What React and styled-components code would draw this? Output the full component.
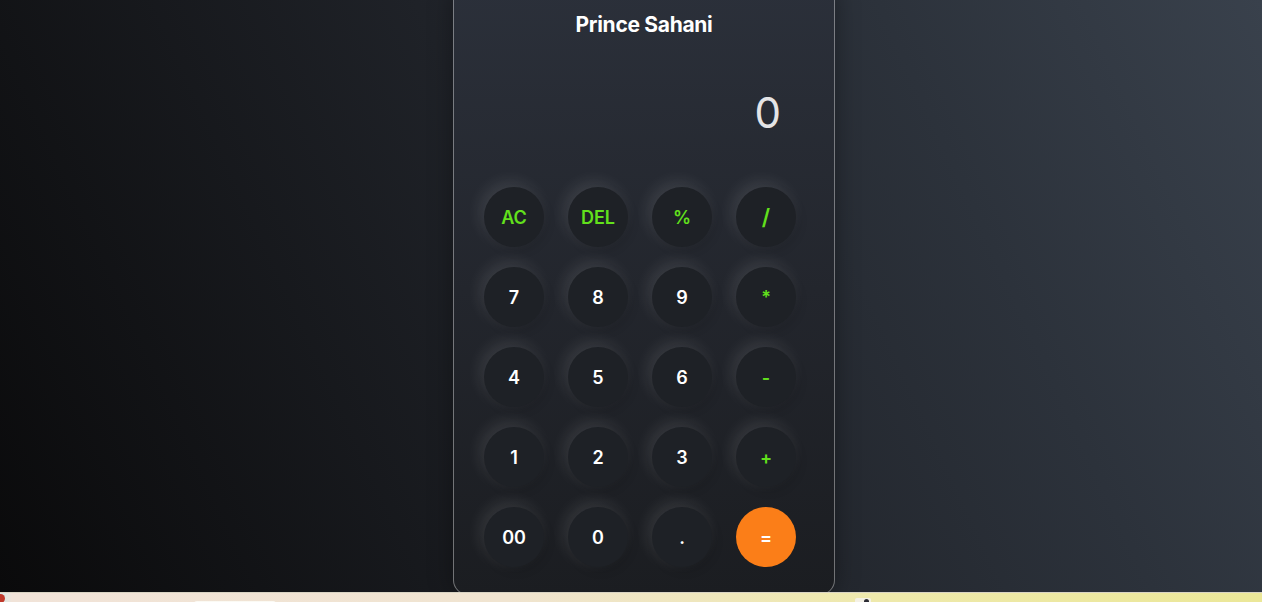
import React from 'react'
import styled, { createGlobalStyle } from 'styled-components'

const GlobalStyle = createGlobalStyle`
  html, body {
    margin: 0;
    padding: 0;
    overflow: hidden;
  }
  body {
    font-family: "Inter", "Noto Sans", sans-serif;
  }
`

const keys = [
  { label: 'AC', kind: 'op' },
  { label: 'DEL', kind: 'op' },
  { label: '%', kind: 'op' },
  { label: '/', kind: 'op', big: true },
  { label: '7' },
  { label: '8' },
  { label: '9' },
  { label: '*', kind: 'op' },
  { label: '4' },
  { label: '5' },
  { label: '6' },
  { label: '-', kind: 'op' },
  { label: '1' },
  { label: '2' },
  { label: '3' },
  { label: '+', kind: 'op' },
  { label: '00' },
  { label: '0' },
  { label: '.' },
  { label: '=', kind: 'eq' },
]

function App() {
  return (
    <Page>
      <GlobalStyle />
      <Stage>
        <Card>
          <Title>Prince Sahani</Title>
          <Display>0</Display>
          <Keypad>
            {keys.map((k) => (
              <Key key={k.label} $kind={k.kind} $big={k.big}>
                {k.label}
              </Key>
            ))}
          </Keypad>
        </Card>
      </Stage>
      <Taskbar>
        <Dot />
        <SearchBox />
        <TrayIcon />
      </Taskbar>
    </Page>
  )
}

const Page = styled.div`
  width: 1262px;
  height: 602px;
  display: flex;
  flex-direction: column;
`

const Stage = styled.div`
  height: 592px;
  overflow: hidden;
  display: flex;
  justify-content: center;
  align-items: flex-start;
  background: linear-gradient(65deg, #0a0a0b 0%, #1f2228 45%, #2c323b 75%, #39414c 100%);
`

const Card = styled.div`
  width: 382px;
  height: 610px;
  margin-top: -15px;
  margin-left: 26px;
  box-sizing: border-box;
  padding: 27px 30px 0 30px;
  border: 1px solid rgba(255, 255, 255, 0.38);
  border-radius: 15px;
  background: linear-gradient(180deg, #2b303a 0%, #23262d 50%, #1b1d21 100%);
  box-shadow: 0 0 24px rgba(0, 0, 0, 0.35);
  display: flex;
  flex-direction: column;
`

const Title = styled.h1`
  margin: 0;
  font-size: 21px;
  line-height: 24px;
  font-weight: 700;
  color: #ffffff;
  text-align: center;
  letter-spacing: -0.3px;
`

const Display = styled.div`
  margin-top: 51px;
  padding-right: 23px;
  height: 50px;
  font-size: 42px;
  line-height: 50px;
  font-weight: 400;
  color: #e4e4e6;
  text-align: right;
`

const Keypad = styled.div`
  margin-top: 49px;
  display: grid;
  grid-template-columns: repeat(4, 60px);
  column-gap: 24px;
  row-gap: 20px;
`

const Key = styled.div`
  width: 60px;
  height: 60px;
  border-radius: 50%;
  display: flex;
  align-items: center;
  justify-content: center;
  font-size: ${(p) => (p.$big ? '22px' : '18px')};
  font-weight: 600;
  color: ${(p) => (p.$kind === 'op' ? '#62e01c' : '#ffffff')};
  background: ${(p) => (p.$kind === 'eq' ? '#fb7e18' : '#1e2126')};
  box-shadow: ${(p) =>
    p.$kind === 'eq'
      ? 'none'
      : '-4px -5px 16px rgba(255, 255, 255, 0.11), 3px 4px 10px rgba(0, 0, 0, 0.12)'};
`

const Taskbar = styled.div`
  position: relative;
  height: 10px;
  background: linear-gradient(90deg, #d6eaea 0px, #f1e3d8 12px, #f0e4d0 40%, #eee9ab 70%, #ebe798 100%);
  border-top: 1px solid #d9d4c4;
  box-sizing: border-box;
  overflow: hidden;
`

const Dot = styled.div`
  position: absolute;
  left: -4px;
  top: 1px;
  width: 9px;
  height: 9px;
  border-radius: 50%;
  background: #c0392b;
`

const SearchBox = styled.div`
  position: absolute;
  left: 194px;
  top: 8px;
  width: 82px;
  height: 4px;
  background: #fbfaf4;
  border-radius: 3px 3px 0 0;
`

const TrayIcon = styled.div`
  position: absolute;
  left: 855px;
  top: 5px;
  width: 16px;
  height: 8px;
  background: #f4f1e6;
  border-radius: 2px;
  &::after {
    content: '';
    position: absolute;
    left: 9px;
    top: 1px;
    width: 5px;
    height: 5px;
    border-radius: 50%;
    background: #2c2c34;
  }
`

export default App
